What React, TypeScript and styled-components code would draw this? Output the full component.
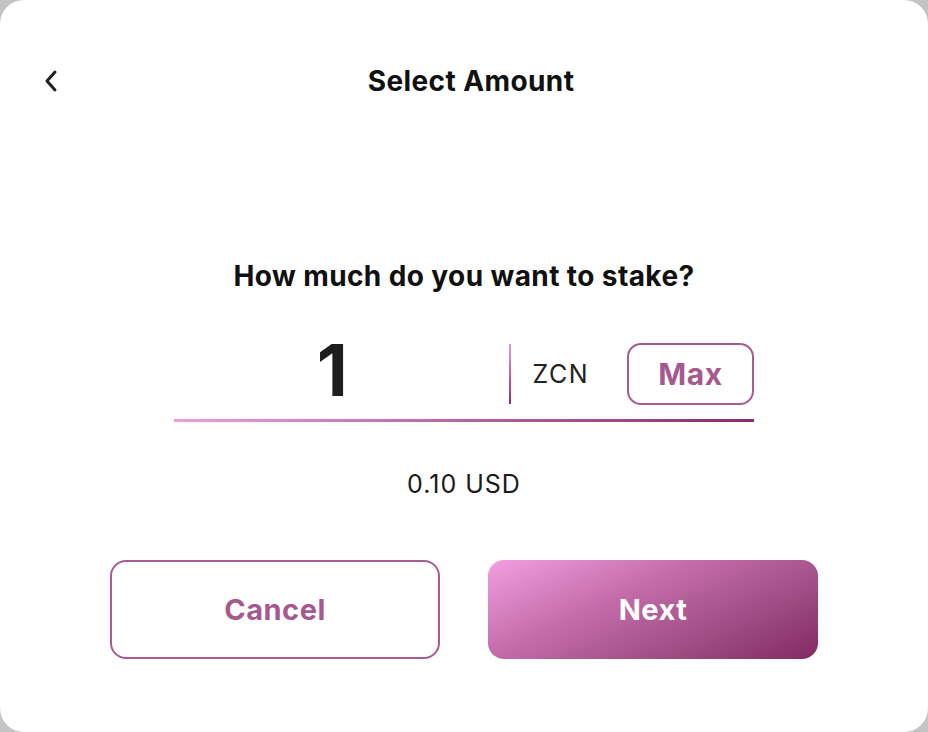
import React from "react";
import styled, { createGlobalStyle } from "styled-components";

const GlobalStyle = createGlobalStyle`
  html, body {
    margin: 0;
    padding: 0;
    background: #c4c4c4;
  }
  body {
    font-family: Inter, "Liberation Sans", sans-serif;
    color: #111;
  }
`;

const Card = styled.div`
  width: 928px;
  height: 732px;
  background: #fff;
  border-radius: 24px;
  display: flex;
  flex-direction: column;
  align-items: center;
  box-sizing: border-box;
`;

const Header = styled.div`
  width: 100%;
  height: 46px;
  margin-top: 58px;
  padding: 0 44px;
  box-sizing: border-box;
  display: flex;
  align-items: center;
`;

const BackButton = styled.button`
  width: 14px;
  height: 24px;
  padding: 0;
  border: none;
  background: none;
  display: flex;
  align-items: center;
  justify-content: flex-start;
  cursor: pointer;
`;

const Title = styled.h1`
  flex: 1;
  margin: 0;
  text-align: center;
  font-size: 28px;
  letter-spacing: 0.4px;
  font-weight: 700;
  color: #111;
`;

const Question = styled.h2`
  margin: 156px 0 0;
  line-height: 32px;
  font-size: 28px;
  letter-spacing: 0.4px;
  font-weight: 700;
  color: #111;
`;

const AmountRow = styled.div`
  width: 580px;
  height: 62px;
  margin-top: 51px;
  display: flex;
  align-items: center;
`;

const AmountValue = styled.div`
  flex: 1;
  padding: 0 18px 8px 0;
  text-align: center;
  font-size: 72px;
  font-weight: 700;
  line-height: 62px;
  color: #1e1e1e;
`;

const Divider = styled.div`
  width: 2px;
  height: 60px;
  background: linear-gradient(180deg, #ee9ad8 0%, #8a2c6a 100%);
`;

const Currency = styled.span`
  margin-left: 22px;
  font-size: 25px;
  letter-spacing: 1.5px;
  color: #222;
`;

const MaxButton = styled.button`
  margin-left: 38px;
  width: 127px;
  height: 62px;
  border: 2px solid #a95b91;
  border-radius: 14px;
  background: #fff;
  font-family: inherit;
  font-size: 30px;
  letter-spacing: 0.6px;
  font-weight: 700;
  color: #a55a8f;
  cursor: pointer;
`;

const Underline = styled.div`
  width: 580px;
  height: 3px;
  margin-top: 14px;
  background: linear-gradient(90deg, #f09ddc 0%, #b8639d 50%, #8a2c6a 100%);
`;

const Converted = styled.div`
  margin-top: 48px;
  line-height: 28px;
  font-size: 25px;
  letter-spacing: 1px;
  color: #1a1a1a;
`;

const Actions = styled.div`
  margin-top: 62px;
  display: flex;
  gap: 48px;
`;

const ActionButton = styled.button<{ $primary?: boolean }>`
  width: 330px;
  height: 99px;
  border-radius: 16px;
  font-family: inherit;
  font-size: 29px;
  letter-spacing: 0.5px;
  font-weight: 700;
  cursor: pointer;
  border: ${(p) => (p.$primary ? "none" : "2px solid #a95b91")};
  color: ${(p) => (p.$primary ? "#fff" : "#a55a8f")};
  background: ${(p) =>
    p.$primary
      ? "linear-gradient(155deg, #f39ee1 0%, #c26aa8 40%, #a04e85 70%, #832a62 100%)"
      : "#fff"};
`;

const App = () => {
  return (
    <>
      <GlobalStyle />
      <Card>
        <Header>
          <BackButton aria-label="Back">
            <svg width="14" height="24" viewBox="0 0 14 24" fill="none">
              <path
                d="M11 3 L3 12 L11 21"
                stroke="#1f1f24"
                strokeWidth="3"
                strokeLinecap="round"
                strokeLinejoin="round"
              />
            </svg>
          </BackButton>
          <Title>Select Amount</Title>
        </Header>
        <Question>How much do you want to stake?</Question>
        <AmountRow>
          <AmountValue>1</AmountValue>
          <Divider />
          <Currency>ZCN</Currency>
          <MaxButton>Max</MaxButton>
        </AmountRow>
        <Underline />
        <Converted>0.10 USD</Converted>
        <Actions>
          <ActionButton>Cancel</ActionButton>
          <ActionButton $primary>Next</ActionButton>
        </Actions>
      </Card>
    </>
  );
};

export default App;
